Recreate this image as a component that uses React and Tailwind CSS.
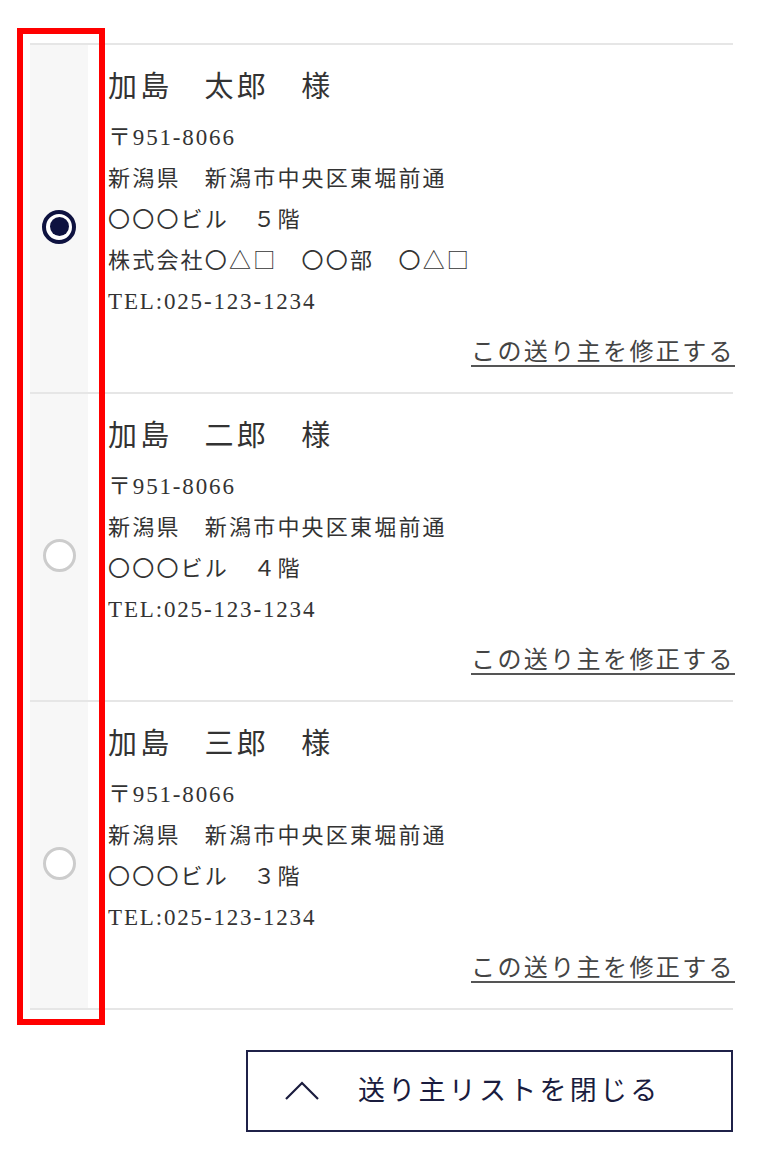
import React from "react";

const font = { fontFamily: '"Liberation Serif", "Noto Sans CJK JP", serif' };
const cjk = { fontFamily: '"Noto Sans CJK JP", sans-serif' };

const rows = [
  {
    name: "加島　太郎　様",
    selected: true,
    lines: [
      "〒951-8066",
      "新潟県　新潟市中央区東堀前通",
      "〇〇〇ビル　５階",
      "株式会社〇△□　〇〇部　〇△□",
      "TEL:025-123-1234",
    ],
  },
  {
    name: "加島　二郎　様",
    selected: false,
    lines: [
      "〒951-8066",
      "新潟県　新潟市中央区東堀前通",
      "〇〇〇ビル　４階",
      "TEL:025-123-1234",
    ],
  },
  {
    name: "加島　三郎　様",
    selected: false,
    lines: [
      "〒951-8066",
      "新潟県　新潟市中央区東堀前通",
      "〇〇〇ビル　３階",
      "TEL:025-123-1234",
    ],
  },
];

function Line({ text }) {
  const parts = text.split(/([△□])/);
  const latin = /^[A-Z〒0-9]/.test(text);
  return (
    <div
      className={
        latin
          ? "h-[41px] overflow-hidden text-[23px] leading-[41px] tracking-[0.08em] whitespace-nowrap"
          : "h-[41px] overflow-hidden text-[22px] leading-[41px] tracking-[0.1em] whitespace-nowrap"
      }
    >
      {parts.map((p, k) =>
        p === "△" || p === "□" ? (
          <span key={k} style={cjk} className="leading-none">{p}</span>
        ) : (
          <React.Fragment key={k}>{p}</React.Fragment>
        )
      )}
    </div>
  );
}

function Radio({ selected }) {
  if (selected) {
    return (
      <div className="w-[34px] h-[34px] rounded-full border-[4px] border-[#0e1240] bg-white flex items-center justify-center">
        <div className="w-[19px] h-[19px] rounded-full bg-[#0e1240]" />
      </div>
    );
  }
  return <div className="w-[33px] h-[33px] rounded-full border-[3px] border-[#cccccc] bg-white" />;
}

export default function App() {
  return (
    <div className="relative w-[762px] min-h-[1151px] bg-white text-[#333333]" style={font}>
      <div className="pt-[43px] pl-[30px] pr-[29px]">
        <div className="border-t-2 border-[#e6e6e6]">
          {rows.map((r, i) => (
            <div key={i} className="flex border-b-2 border-[#e6e6e6]">
              <div className="w-[58px] shrink-0 bg-[#f7f7f7] flex items-center justify-center pt-[16px]">
                <Radio selected={r.selected} />
              </div>
              <div className="flex-1 pl-[20px] pt-[20px] pb-[20px]">
                <div className="h-[44px] text-[29px] leading-[44px] tracking-[0.11em] text-[#333333]">{r.name}</div>
                <div className="mt-[8px]">
                  {r.lines.map((l, j) => (
                    <Line key={j} text={l} />
                  ))}
                </div>
                <div className="mt-[10px] h-[40px] flex justify-end">
                  <a className="text-[24px] leading-[40px] tracking-[0.1em] text-[#444444] underline underline-offset-[5px] decoration-[2px] decoration-[#555555] mr-[-2px]">
                    この送り主を修正する
                  </a>
                </div>
              </div>
            </div>
          ))}
        </div>
        <div className="flex justify-end mt-[40px]">
          <button className="w-[487px] h-[82px] border-2 border-[#1f2148] flex items-center pl-[36px] text-[#1a1c3e]">
            <svg width="36" height="20" viewBox="0 0 36 20" fill="none">
              <path d="M2 18 L18 2 L34 18" stroke="#1a1c3e" strokeWidth="2.2" />
            </svg>
            <span className="ml-[38px] text-[27px] tracking-[0.12em] leading-none">送り主リストを閉じる</span>
          </button>
        </div>
      </div>
      <div className="absolute left-[17px] top-[28px] w-[88px] h-[997px] border-[6px] border-[#ff0000] pointer-events-none" />
    </div>
  );
}
